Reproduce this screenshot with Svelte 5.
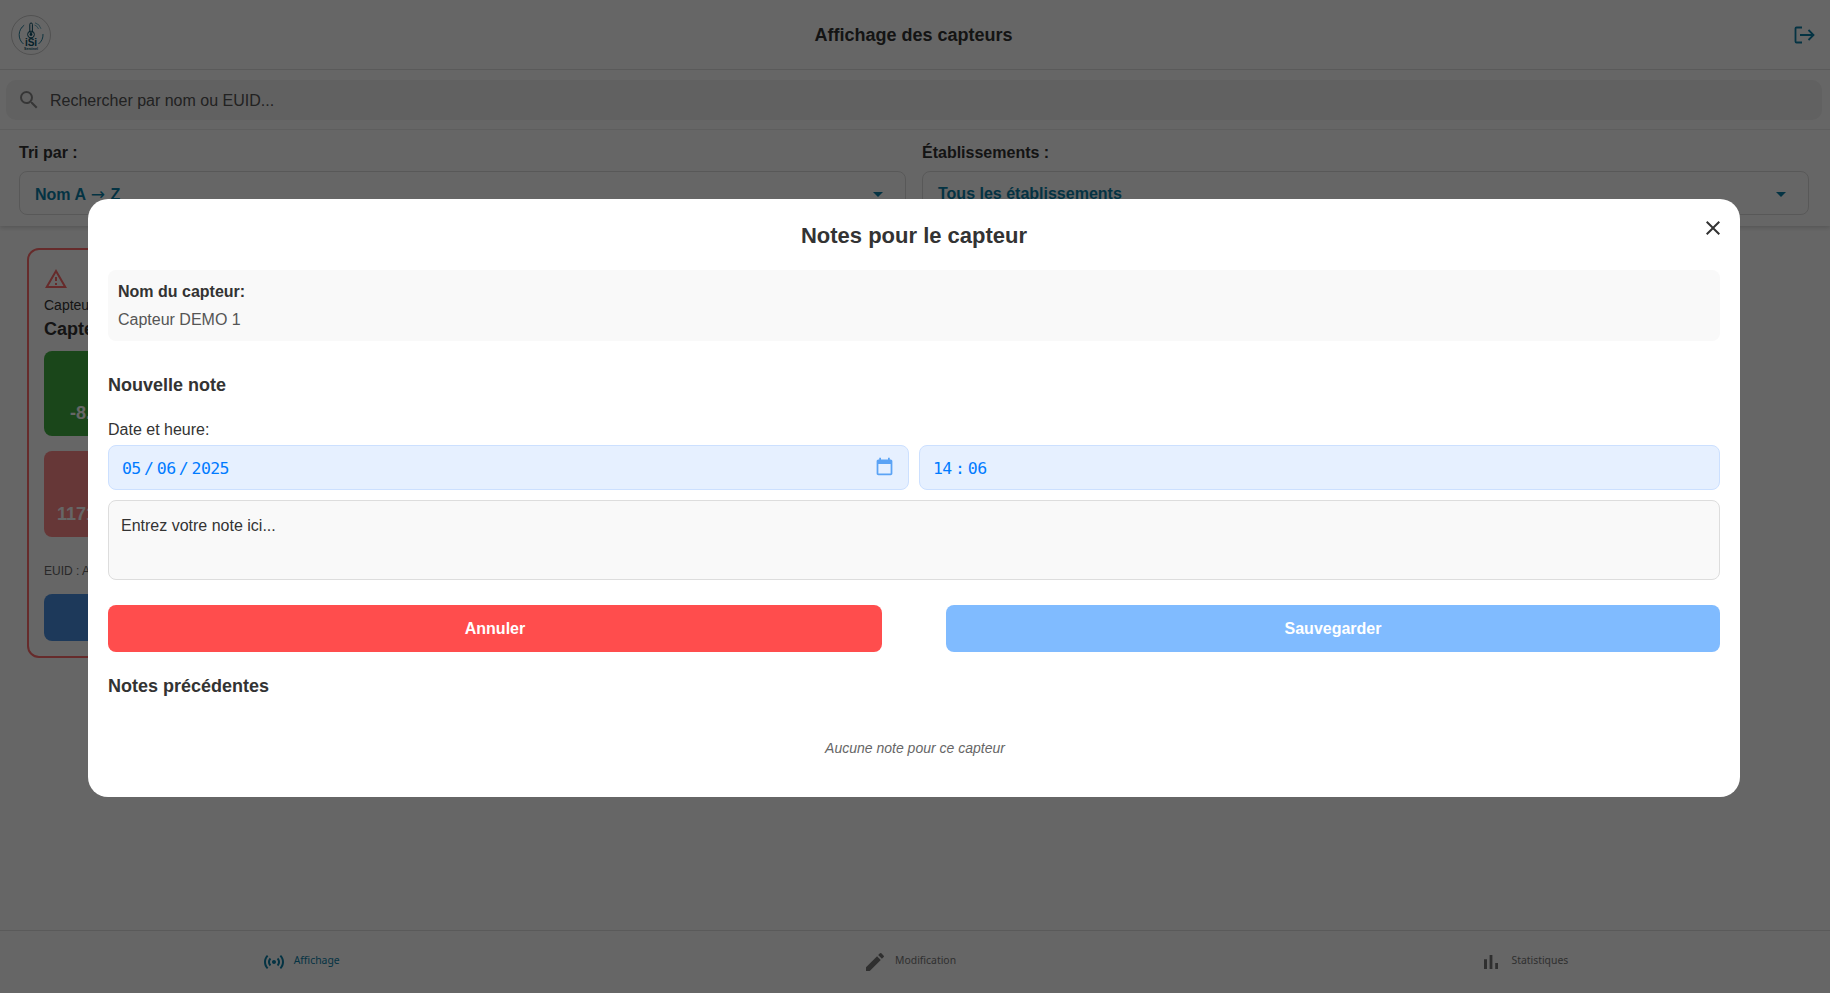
<script>
    let query = '';
    let note = '';
    let site = 'Tous les établissements';
</script>

<div class="page">
    <header class="topbar">
        <div class="logo">
            <svg viewBox="0 0 40 40" width="40" height="40">
                <circle cx="20" cy="20" r="19.500" fill="#fff" stroke="#bdbdbd" stroke-width="0.8" />
                <path d="M13.2 10.2 A11.8 11.8 0 0 0 12.5 29" fill="none" stroke="#0b6e8f" stroke-width="0.9" />
                <path d="M32 19 A12 12 0 0 1 27.5 29" fill="none" stroke="#0b6e8f" stroke-width="0.9" />
                <path d="M23.5 10 a6 6 0 0 1 4 4 M24 7.800 a8.500 8.500 0 0 1 6 6" fill="none" stroke="#4a9ab5" stroke-width="0.8" />
                <rect x="18.8" y="8" width="2.6" height="10" rx="1.3" fill="none" stroke="#0a4f68" stroke-width="1" />
                <circle cx="20" cy="19.500" r="3.4" fill="none" stroke="#0a4f68" stroke-width="1" />
                <circle cx="20" cy="19.500" r="1.4" fill="#0a4f68" />
                <text x="20" y="31" class="logo-main">iSi</text>
                <text x="20" y="35" class="logo-sub">Sentinel</text>
            </svg>
        </div>
        <h1>Affichage des capteurs</h1>
        <svg class="logout" viewBox="0 0 24 24" width="24" height="24" fill="none" stroke="#0a7fa8" stroke-width="1.800">
            <path d="M10 4.500H4.500a1 1 0 0 0-1 1v13a1 1 0 0 0 1 1H10" />
            <path d="M8 12h13M16.500 7l5 5-5 5" />
        </svg>
    </header>

    <div class="search-wrap">
        <div class="search">
            <svg viewBox="0 0 24 24" width="24" height="24" fill="#888">
                <path d="M15.500 14h-.79l-.28-.27A6.470 6.470 0 0 0 16 9.500 6.500 6.500 0 1 0 9.500 16c1.610 0 3.090-.59 4.230-1.570l.27.28v.79l5 4.990L20.490 19l-4.990-5zm-6 0C7.010 14 5 11.990 5 9.500S7.010 5 9.500 5 14 7.010 14 9.500 11.990 14 9.500 14z" />
            </svg>
            <input type="text" placeholder="Rechercher par nom ou EUID..." bind:value={query} />
        </div>
    </div>

    <div class="filters">
        <div class="filter">
            <span class="filter-label">Tri par :</span>
            <div class="select"><span>Nom A <span class="arrow">→</span> Z</span><i class="caret"></i></div>
        </div>
        <div class="filter">
            <span class="filter-label">Établissements :</span>
            <div class="select"><span>{site}</span><i class="caret"></i></div>
        </div>
    </div>

    <main class="content">
        <article class="card">
            <svg class="alert" viewBox="0 0 24 24" width="24" height="24" fill="#ff6b6b">
                <path d="M12 5.990 19.530 19H4.470L12 5.990M12 2 1 21h22L12 2zm1 14h-2v2h2v-2zm0-6h-2v4h2v-4z" />
            </svg>
            <p class="card-type">Capteur de test</p>
            <h2>Capteur DEMO 1</h2>
            <div class="tiles">
                <div class="tile ok"><span class="tile-value">-8.5 dB</span></div>
                <div class="tile bad">
                    <svg viewBox="0 0 24 24" width="30" height="24" fill="#fff">
                        <path d="M6 2v6l4 4-4 4v6h12v-6l-4-4 4-4V2H6zm10 14.500V20H8v-3.500l4-4 4 4z" />
                    </svg>
                    <span class="tile-value">1171 mins</span>
                </div>
            </div>
            <p class="euid">EUID : A84041000181</p>
            <div class="card-btn"></div>
        </article>
    </main>

    <nav class="bottom">
        <div class="tab active">
            <svg viewBox="0 0 24 24" width="24" height="24" fill="#0a7fa8">
                <path d="M7.760 16.240C6.670 15.160 6 13.660 6 12s.67-3.160 1.760-4.240l1.420 1.420C8.450 9.900 8 10.900 8 12c0 1.100.45 2.100 1.170 2.830l-1.410 1.410zm8.480 0C17.330 15.160 18 13.660 18 12s-.67-3.160-1.760-4.240l-1.420 1.420C15.550 9.900 16 10.900 16 12c0 1.100-.45 2.100-1.170 2.830l1.410 1.410zM12 10c-1.100 0-2 .9-2 2s.9 2 2 2 2-.9 2-2-.9-2-2-2zm8 2c0 2.210-.9 4.210-2.350 5.650l1.420 1.420C20.880 17.260 22 14.760 22 12s-1.120-5.260-2.930-7.070l-1.420 1.420C19.100 7.790 20 9.790 20 12zM6.350 6.350 4.930 4.930C3.120 6.740 2 9.240 2 12s1.120 5.260 2.930 7.070l1.420-1.420C4.900 16.210 4 14.210 4 12s.9-4.210 2.350-5.650z" />
            </svg>
            <span>Affichage</span>
        </div>
        <div class="tab">
            <svg viewBox="0 0 24 24" width="24" height="24" fill="#777">
                <path d="M3 17.250V21h3.750L17.810 9.940l-3.750-3.750L3 17.250zM20.710 7.040a1 1 0 0 0 0-1.410l-2.340-2.340a1 1 0 0 0-1.410 0l-1.830 1.830 3.750 3.750 1.830-1.830z" />
            </svg>
            <span>Modification</span>
        </div>
        <div class="tab">
            <svg viewBox="0 0 24 24" width="24" height="24" fill="#777">
                <path d="M5 9.200h3V19H5zM10.600 5h2.800v14h-2.800zm5.600 8H19v6h-2.800z" />
            </svg>
            <span>Statistiques</span>
        </div>
    </nav>
</div>

<div class="overlay">
    <section class="modal">
        <button class="close" aria-label="Fermer">
            <svg viewBox="0 0 24 24" width="24" height="24" fill="#333">
                <path d="M19 6.410 17.590 5 12 10.590 6.410 5 5 6.410 10.590 12 5 17.590 6.410 19 12 13.410 17.590 19 19 17.590 13.410 12z" />
            </svg>
        </button>
        <h3 class="modal-title">Notes pour le capteur</h3>

        <div class="sensor-info">
            <strong>Nom du capteur:</strong>
            <span>Capteur DEMO 1</span>
        </div>

        <h4 class="section-title new-note">Nouvelle note</h4>
        <label class="field-label" for="note">Date et heure:</label>
        <div class="datetime">
            <div class="dt-input">
                <span class="dt-value">05<span class="sep">/</span>06<span class="sep">/</span>2025</span>
                <svg class="calendar" viewBox="0 0 24 24" width="21" height="21" fill="#5ba3f5">
                    <path d="M19 4h-1V2h-2v2H8V2H6v2H5c-1.100 0-2 .9-2 2v14c0 1.100.9 2 2 2h14c1.100 0 2-.9 2-2V6c0-1.100-.9-2-2-2zm0 16H5V9h14v11z" />
                </svg>
            </div>
            <div class="dt-input"><span class="dt-value">14<span class="sep">:</span>06</span></div>
        </div>
        <textarea id="note" placeholder="Entrez votre note ici..." bind:value={note}></textarea>

        <div class="actions">
            <button class="btn cancel">Annuler</button>
            <button class="btn save">Sauvegarder</button>
        </div>

        <h4 class="section-title">Notes précédentes</h4>
        <p class="empty">Aucune note pour ce capteur</p>
    </section>
</div>

<style>
    :global(body) {
        margin: 0;
        background: #fff;
        font-family: "Liberation Sans", Arial, sans-serif;
    }

    .page {
        height: 993px;
        display: flex;
        flex-direction: column;
        overflow: hidden;
    }

    .topbar {
        height: 69px;
        flex: none;
        display: grid;
        grid-template-columns: 1fr auto 1fr;
        align-items: center;
        padding: 0 14px 0 11px;
        border-bottom: 1px solid #e0e0e0;
    }

    .logo {
        height: 40px;
    }

    .logo-main {
        font: bold 10px "Liberation Sans", sans-serif;
        fill: #0a4f68;
        text-anchor: middle;
    }

    .logo-sub {
        font: bold 3.600px "Liberation Sans", sans-serif;
        fill: #0a4f68;
        text-anchor: middle;
    }

    .topbar h1 {
        margin: 2px 0 0;
        font-size: 18px;
        font-weight: 700;
        color: #333;
    }

    .logout {
        justify-self: end;
    }

    .search-wrap {
        flex: none;
        height: 60px;
        padding: 10px 8px 10px 6px;
        box-sizing: border-box;
        border-bottom: 1px solid #eee;
    }

    .search {
        height: 40px;
        display: flex;
        align-items: center;
        gap: 9px;
        padding: 0 12px 0 11px;
        background: #f2f2f2;
        border-radius: 10px;
    }

    .search input {
        flex: 1;
        border: 0;
        outline: 0;
        background: transparent;
        font: 16px "Liberation Sans", sans-serif;
        padding: 2px 0 0;
    }

    .search input::placeholder {
        color: #555;
        opacity: 1;
    }

    .filters {
        flex: none;
        height: 96px;
        box-sizing: border-box;
        display: grid;
        grid-template-columns: 1fr 1fr;
        gap: 16px;
        padding: 13px 21px 0 19px;
        box-shadow: 0 2px 4px rgba(0, 0, 0, 0.15);
    }

    .filter-label {
        display: block;
        font-size: 16px;
        font-weight: 700;
        color: #333;
        line-height: 20px;
        margin-bottom: 8px;
    }

    .select {
        height: 44px;
        box-sizing: border-box;
        display: flex;
        align-items: center;
        justify-content: space-between;
        padding: 2px 22px 0 15px;
        border: 1px solid #ddd;
        border-radius: 8px;
        font-size: 16px;
        font-weight: 700;
        color: #0a7fa8;
    }

    .arrow {
        font-family: "DejaVu Sans", sans-serif;
        font-weight: 400;
        font-size: 17px;
        margin: 0 1px;
    }

    .caret {
        width: 0;
        height: 0;
        border-left: 5px solid transparent;
        border-right: 5px solid transparent;
        border-top: 5px solid #0a7fa8;
    }

    .content {
        flex: 1;
        padding: 22px 27px;
    }

    .card {
        width: 340px;
        height: 410px;
        box-sizing: border-box;
        padding: 17px 15px;
        border: 2px solid #ff6b6b;
        border-radius: 12px;
    }

    .alert {
        display: block;
    }

    .card-type {
        margin: 6px 0 0;
        font-size: 14px;
        color: #333;
    }

    .card h2 {
        margin: 6px 0 0;
        font-size: 18px;
        color: #333;
    }

    .tiles {
        margin-top: 11px;
        display: flex;
        flex-direction: column;
        gap: 15px;
    }

    .tile {
        width: 112px;
        height: 85px;
        display: flex;
        flex-direction: column;
        align-items: center;
        justify-content: flex-end;
        gap: 12px;
        padding-bottom: 12px;
        box-sizing: border-box;
        border-radius: 8px;
        color: #fff;
    }

    .tile-value {
        font-size: 18px;
        font-weight: 700;
        white-space: nowrap;
    }

    .ok {
        background: #43b043;
    }

    .bad {
        background: #ff8a8a;
        height: 86px;
    }

    .euid {
        margin: 27px 0 0;
        font-size: 12px;
        color: #666;
    }

    .card-btn {
        margin-top: 16px;
        height: 47px;
        background: #4a90e2;
        border-radius: 8px;
    }

    .bottom {
        flex: none;
        height: 62px;
        display: flex;
        justify-content: space-around;
        border-top: 1px solid #e0e0e0;
    }

    .tab {
        display: flex;
        align-items: center;
        gap: 8px;
        font: 10.400px "Noto Sans", sans-serif;
        color: #777;
    }

    .tab span {
        margin-top: -4px;
    }

    .tab.active {
        color: #0a7fa8;
    }

    .overlay {
        position: fixed;
        inset: 0;
        display: flex;
        justify-content: center;
        align-items: flex-start;
        padding: 199px 2px 0 0;
        box-sizing: border-box;
        background: rgba(0, 0, 0, 0.6);
    }

    .modal {
        position: relative;
        width: 1652px;
        height: 598px;
        box-sizing: border-box;
        padding: 20px;
        background: #fff;
        border-radius: 20px;
    }

    .close {
        position: absolute;
        top: 17px;
        right: 15px;
        width: 24px;
        height: 24px;
        padding: 0;
        border: 0;
        background: none;
    }

    .modal-title {
        margin: 1px 0 0;
        text-align: center;
        font-size: 22px;
        line-height: 32px;
        font-weight: 700;
        color: #333;
    }

    .sensor-info {
        margin-top: 18px;
        height: 71px;
        box-sizing: border-box;
        padding: 13px 10px 0;
        display: flex;
        flex-direction: column;
        gap: 10px;
        background: #f9f9f9;
        border-radius: 8px;
        font-size: 16px;
        line-height: 18px;
        color: #333;
    }

    .sensor-info span {
        color: #555;
    }

    .section-title {
        margin: 0;
        font-size: 18px;
        line-height: 21px;
        font-weight: 700;
        color: #333;
    }

    .new-note {
        margin-top: 34px;
    }

    .field-label {
        display: block;
        margin-top: 25px;
        font-size: 16px;
        line-height: 18px;
        color: #333;
    }

    .datetime {
        margin-top: 6px;
        display: flex;
        gap: 10px;
    }

    .dt-input {
        flex: 1;
        height: 45px;
        box-sizing: border-box;
        display: flex;
        align-items: center;
        justify-content: space-between;
        padding: 0 13px;
        background: #e6f0ff;
        border: 1px solid #cce0ff;
        border-radius: 8px;
    }

    .dt-value {
        font: 16.500px "DejaVu Sans Mono", monospace;
        letter-spacing: -0.6px;
        color: #007bff;
        padding-top: 2px;
    }

    .sep {
        margin: 0 3.400px;
    }

    .calendar {
        margin-top: -3px;
    }

    textarea {
        display: block;
        width: 100%;
        height: 80px;
        margin-top: 10px;
        box-sizing: border-box;
        padding: 16px 12px;
        background: #f9f9f9;
        border: 1px solid #ddd;
        border-radius: 8px;
        resize: none;
        outline: 0;
        font: 16px "Liberation Sans", sans-serif;
    }

    textarea::placeholder {
        color: #333;
        opacity: 1;
    }

    .actions {
        margin-top: 25px;
        display: flex;
        justify-content: space-between;
    }

    .btn {
        width: 774px;
        height: 47px;
        padding: 1px 0 0;
        border: 0;
        border-radius: 8px;
        color: #fff;
        font: bold 16px "Liberation Sans", sans-serif;
    }

    .cancel {
        background: #ff4d4d;
    }

    .save {
        background: #80bbff;
    }

    .actions + .section-title {
        margin-top: 24px;
    }

    .empty {
        margin: 43px 0 0;
        padding-left: 2px;
        text-align: center;
        font-size: 14px;
        font-style: italic;
        color: #666;
    }
</style>
